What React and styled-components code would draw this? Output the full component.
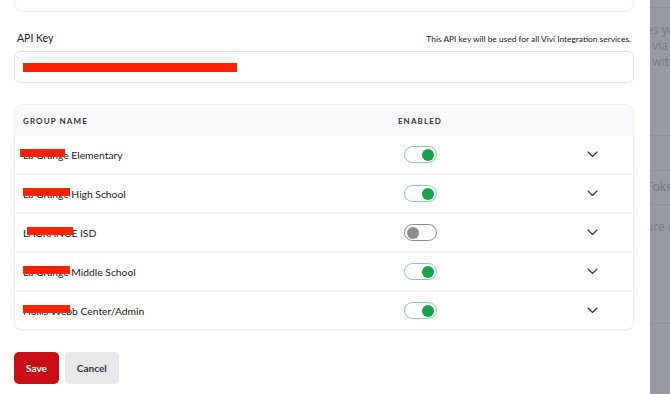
import React from "react";
import styled, { createGlobalStyle } from "styled-components";

const Global = createGlobalStyle`
  html, body { margin: 0; padding: 0; background: #fff; }
  body { font-family: Lato, "Noto Sans", sans-serif; color: #222; }
  #root { width: 670px; height: 394px; overflow: hidden; }
`;

const Page = styled.div`
  display: flex;
  width: 670px;
  height: 394px;
  overflow: hidden;
`;

const Main = styled.div`
  flex: 1;
  display: flex;
  flex-direction: column;
  padding: 0 16px 0 14px;
`;

const TopCard = styled.div`
  height: 11px;
  border: 1px solid #ececef;
  border-top: none;
  border-radius: 0 0 9px 9px;
`;

const LabelRow = styled.div`
  display: flex;
  justify-content: space-between;
  align-items: baseline;
  margin-top: 20px;
  padding: 0 3px 0 3px;
`;

const Label = styled.span`
  font-size: 10.5px;
  color: #222;
`;

const Hint = styled.span`
  font-size: 8.4px;
  color: #222;
`;

const Input = styled.div`
  margin-top: 7px;
  height: 30px;
  border: 1px solid #e3e3e6;
  border-radius: 6px;
  display: flex;
  align-items: center;
  padding-left: 8px;
`;

const RedBar = styled.div`
  width: ${p => p.$w}px;
  height: 9px;
  background: #ff2200;
`;

const Table = styled.div`
  margin-top: 21px;
  border: 1px solid #efeff2;
  border-radius: 8px;
  box-shadow: 0 1px 2px rgba(0,0,0,0.06);
  overflow: hidden;
`;

const HeadRow = styled.div`
  display: grid;
  grid-template-columns: 1fr 70px 178px;
  align-items: center;
  height: 31px;
  background: #f9f9fb;
  padding-left: 8px;
`;

const HeadCell = styled.div`
  font-size: 8px;
  font-weight: 700;
  letter-spacing: 1.1px;
  color: #333;
  text-align: ${p => p.$center ? "center" : "left"};
`;

const Row = styled.div`
  display: grid;
  grid-template-columns: 1fr 70px 178px;
  align-items: center;
  height: 37px;
  padding-left: 8px;
  border-bottom: 2px solid #f2f2f4;
  &:last-child { border-bottom: none; }
`;

const Name = styled.div`
  position: relative;
  font-size: 10.3px;
  color: #222;
`;

const Redact = styled.span`
  position: absolute;
  left: ${p => p.$l}px;
  top: 0;
  width: ${p => p.$w}px;
  height: 8px;
  background: #ff2200;
`;

const ToggleCell = styled.div`
  display: flex;
  justify-content: center;
`;

const Toggle = styled.div`
  width: 27px;
  height: 15px;
  border: 1.2px solid ${p => p.$on ? "#7fd6a0" : "#8a8a8a"};
  border-radius: 9px;
  display: flex;
  align-items: center;
  justify-content: ${p => p.$on ? "flex-end" : "flex-start"};
  padding: 0 2px;
  box-sizing: content-box;
  box-shadow: inset 0 0 0 1px #fff;
`;

const Knob = styled.div`
  width: 12px;
  height: 12px;
  border-radius: 50%;
  background: ${p => p.$on ? "#16a34a" : "#8c8c8c"};
`;

const ChevronCell = styled.div`
  display: flex;
  justify-content: flex-end;
  padding-right: 35px;
`;

const Buttons = styled.div`
  display: flex;
  gap: 6px;
  margin-top: 22px;
`;

const Button = styled.button`
  height: 32px;
  border: none;
  border-radius: 5px;
  padding: 0 ${p => p.$px}px;
  font-family: Lato, "Noto Sans", sans-serif;
  font-size: 10px;
  font-weight: 700;
  background: ${p => p.$primary ? "#c80d16" : "#e8e8ea"};
  color: ${p => p.$primary ? "#fff" : "#333"};
`;

const Side = styled.div`
  width: 20px;
  flex-shrink: 0;
  background: #979aa4;
  overflow: hidden;
  display: flex;
  flex-direction: column;
`;

const SideInner = styled.div`
  margin-left: ${p => p.$ml}px;
  width: 200px;
  display: flex;
  flex-direction: column;
`;

const SideLine = styled.div`
  height: 1px;
  background: #8e919b;
  margin-top: ${p => p.$mt}px;
`;

const SideText = styled.div`
  font-family: "Open Sans", sans-serif;
  font-size: 12px;
  line-height: 16px;
  color: #767982;
  white-space: nowrap;
  margin-top: ${p => p.$mt || 0}px;
`;

const Chevron = () => (
  <svg width="11" height="7" viewBox="0 0 11 7" fill="none">
    <path d="M1 1l4.5 4.5L10 1" stroke="#333" strokeWidth="1.1" strokeLinecap="round" strokeLinejoin="round" />
  </svg>
);

const rows = [
  { name: "La Grange Elementary", on: true, l: -3, w: 45 },
  { name: "La Grange High School", on: true, l: 0, w: 47 },
  { name: "LAGRANGE ISD", on: false, l: 4, w: 46 },
  { name: "La Grange Middle School", on: true, l: 0, w: 47 },
  { name: "Hollis Webb Center/Admin", on: true, l: 0, w: 47 },
];

export default function App() {
  return (
    <Page>
      <Global />
      <Main>
        <TopCard />
        <LabelRow>
          <Label>API Key</Label>
          <Hint>This API key will be used for all Vivi Integration services.</Hint>
        </LabelRow>
        <Input>
          <RedBar $w={214} />
        </Input>
        <Table>
          <HeadRow>
            <HeadCell>GROUP NAME</HeadCell>
            <HeadCell $center>ENABLED</HeadCell>
            <div />
          </HeadRow>
          {rows.map((r) => (
            <Row key={r.name}>
              <Name>
                {r.name}
                <Redact $l={r.l} $w={r.w} />
              </Name>
              <ToggleCell>
                <Toggle $on={r.on}>
                  <Knob $on={r.on} />
                </Toggle>
              </ToggleCell>
              <ChevronCell>
                <Chevron />
              </ChevronCell>
            </Row>
          ))}
        </Table>
        <Buttons>
          <Button $primary $px={12}>Save</Button>
          <Button $px={12}>Cancel</Button>
        </Buttons>
      </Main>
      <Side>
        <SideInner $ml={-4}>
          <SideLine $mt={7} />
          <SideText $mt={14}>es your data</SideText>
          <SideText>l via the API</SideText>
          <SideText>: with care</SideText>
          <SideLine $mt={65} />
          <SideLine $mt={34} />
          <SideText $mt={8}>Token</SideText>
          <SideLine $mt={9} />
          <SideText $mt={14}>ure API</SideText>
          <SideLine $mt={88} />
        </SideInner>
      </Side>
    </Page>
  );
}
